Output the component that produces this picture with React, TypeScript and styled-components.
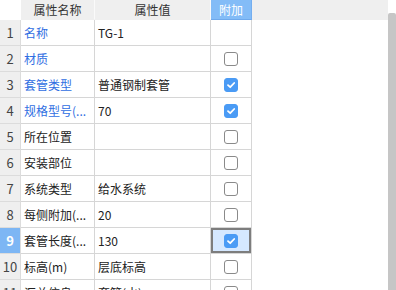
import React from "react";
import styled, { createGlobalStyle } from "styled-components";

type Row = {
  name: string;
  value: string;
  link?: boolean;
  check?: "on" | "off";
};

const rows: Row[] = [
  { name: "名称", value: "TG-1", link: true },
  { name: "材质", value: "", link: true, check: "off" },
  { name: "套管类型", value: "普通钢制套管", link: true, check: "on" },
  { name: "规格型号(...", value: "70", link: true, check: "on" },
  { name: "所在位置", value: "", check: "off" },
  { name: "安装部位", value: "", check: "off" },
  { name: "系统类型", value: "给水系统", check: "off" },
  { name: "每侧附加(...", value: "20", check: "off" },
  { name: "套管长度(...", value: "130", check: "on" },
  { name: "标高(m)", value: "层底标高", check: "off" },
  { name: "汇总信息", value: "套管(水)", check: "off" },
];

const selectedRow = 8;

const GlobalStyle = createGlobalStyle`
  html, body {
    margin: 0;
    padding: 0;
    background: #fff;
    overflow: hidden;
  }
  body {
    font-family: "Noto Sans CJK SC", "Noto Sans", sans-serif;
    font-size: 12px;
    color: #222;
  }
`;

const Page = styled.div`
  display: flex;
  width: 396px;
  height: 290px;
  overflow: hidden;
`;

const Main = styled.div`
  width: 388px;
  display: flex;
  flex-direction: column;
`;

const Track = styled.div`
  width: 8px;
  display: flex;
  justify-content: flex-end;
  padding-top: 13px;
  box-sizing: border-box;
`;

const Thumb = styled.div`
  width: 4px;
  flex: 1;
  background: #c6c6c6;
  border-radius: 2px 2px 0 0;
`;

const HeaderBar = styled.div`
  display: flex;
  height: 20px;
  background: #efefef;
`;

const Grid = styled.div`
  display: grid;
  grid-template-columns: 21px 74px 116px 41px;
`;

const Corner = styled.div`
  background: #fff;
`;

const HeadCell = styled.div<{ $active?: boolean }>`
  display: flex;
  align-items: center;
  justify-content: center;
  height: 20px;
  box-sizing: border-box;
  border-right: 1px solid ${(p) => (p.$active ? "#74aef0" : "#fafafa")};
  background: ${(p) => (p.$active ? "#83bcf7" : "#efefef")};
  color: ${(p) => (p.$active ? "#fff" : "#333")};
  border-bottom: 1px solid ${(p) => (p.$active ? "#6ea9ec" : "#efefef")};
  font-size: 12px;
`;

const Body = styled(Grid)`
  grid-auto-rows: 26px;
`;

const Cell = styled.div`
  display: flex;
  align-items: center;
  box-sizing: border-box;
  border-right: 1px solid #d6d6d6;
  border-bottom: 1px solid #d6d6d6;
  min-width: 0;
  overflow: hidden;
`;

const NumCell = styled(Cell)<{ $selected?: boolean }>`
  justify-content: center;
  background: ${(p) => (p.$selected ? "#7db6f4" : "#efefef")};
  color: ${(p) => (p.$selected ? "#fff" : "#444")};
  font-weight: ${(p) => (p.$selected ? 700 : 400)};
  font-size: 13px;
  border-color: #dcdcdc;
`;

const TextCell = styled(Cell)<{ $link?: boolean }>`
  padding: 0 1px 0 3px;
  color: ${(p) => (p.$link ? "#2f6ee2" : "#222")};
`;

const Label = styled.span`
  white-space: nowrap;
`;

const CheckCell = styled(Cell)<{ $selected?: boolean }>`
  justify-content: center;
  background: ${(p) => (p.$selected ? "#d5e8ff" : "#fff")};
  box-shadow: ${(p) => (p.$selected ? "inset 0 0 0 2px #7d7d7d" : "none")};
`;

const Box = styled.div<{ $on?: boolean }>`
  width: 14px;
  height: 14px;
  box-sizing: border-box;
  border-radius: 3px;
  border: 1px solid ${(p) => (p.$on ? "#4a9bf5" : "#8a8a8a")};
  background: ${(p) => (p.$on ? "#4a9bf5" : "#fff")};
  display: flex;
  align-items: center;
  justify-content: center;
`;

const Tick = () => (
  <svg width="10" height="10" viewBox="0 0 10 10">
    <path
      d="M2 5.2 L4.2 7.2 L8.2 3"
      fill="none"
      stroke="#fff"
      strokeWidth="1.8"
      strokeLinecap="round"
      strokeLinejoin="round"
    />
  </svg>
);

export default function App() {
  return (
    <Page>
      <GlobalStyle />
      <Main>
        <HeaderBar>
          <Grid>
            <Corner />
            <HeadCell>属性名称</HeadCell>
            <HeadCell>属性值</HeadCell>
            <HeadCell $active>附加</HeadCell>
          </Grid>
        </HeaderBar>
        <Body>
          {rows.map((r, i) => (
            <React.Fragment key={i}>
              <NumCell $selected={i === selectedRow}>{i + 1}</NumCell>
              <TextCell $link={r.link}>
                <Label>{r.name}</Label>
              </TextCell>
              <TextCell>
                <Label>{r.value}</Label>
              </TextCell>
              <CheckCell $selected={i === selectedRow}>
                {r.check && (
                  <Box $on={r.check === "on"}>{r.check === "on" && <Tick />}</Box>
                )}
              </CheckCell>
            </React.Fragment>
          ))}
        </Body>
      </Main>
      <Track>
        <Thumb />
      </Track>
    </Page>
  );
}
